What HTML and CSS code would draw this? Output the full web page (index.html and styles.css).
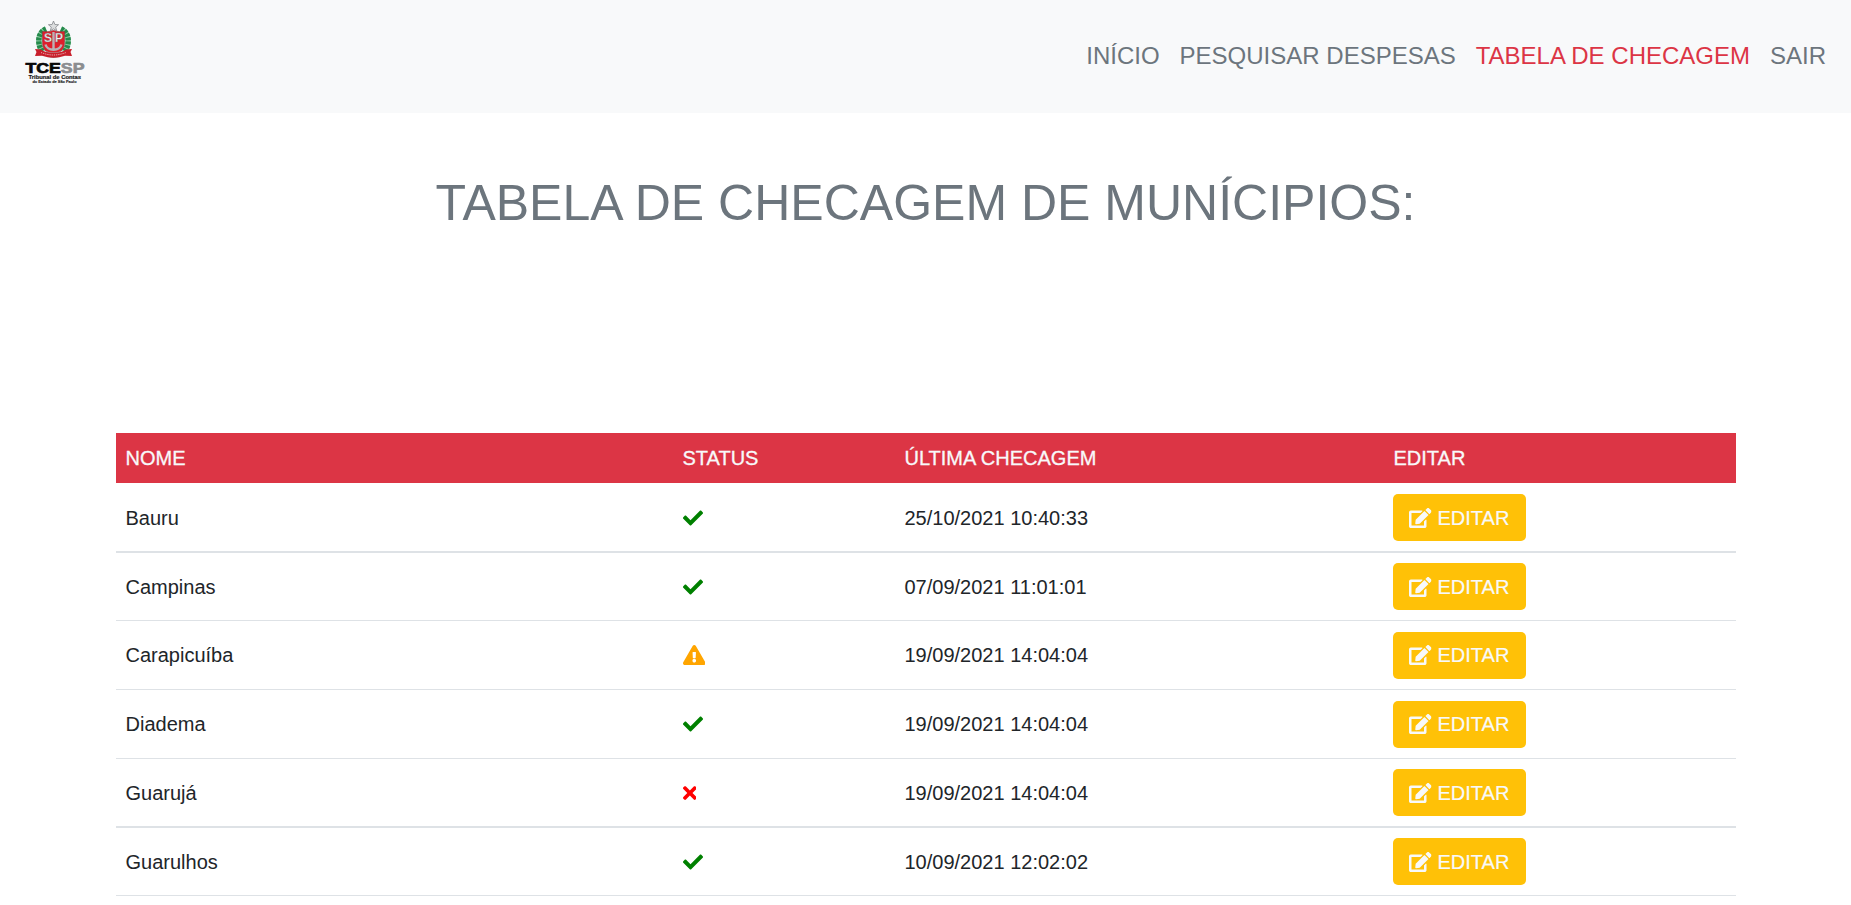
FILE: index.html
```html
<!DOCTYPE html>
<html lang="pt-BR">
<head>
<meta charset="utf-8">
<title>Tabela de Checagem</title>
<link rel="stylesheet" href="styles.css">
</head>
<body>
<svg class="sprite" aria-hidden="true">
  <symbol id="check" viewBox="0 0 512 512"><path d="M173.898 439.404l-166.4-166.4c-9.997-9.997-9.997-26.206 0-36.204l36.203-36.204c9.997-9.998 26.207-9.998 36.204 0L192 312.69 432.095 72.596c9.997-9.997 26.207-9.997 36.204 0l36.203 36.204c9.997 9.997 9.997 26.206 0 36.204l-294.4 294.401c-9.998 9.997-26.207 9.997-36.204-.001z"/></symbol>
  <symbol id="times" viewBox="0 0 352 512"><path d="M242.72 256l100.07-100.07c12.28-12.28 12.28-32.19 0-44.48l-22.24-22.24c-12.28-12.28-32.19-12.28-44.48 0L176 189.28 75.93 89.21c-12.28-12.28-32.19-12.28-44.48 0L9.21 111.45c-12.28 12.28-12.28 32.19 0 44.48L109.28 256 9.21 356.07c-12.28 12.28-12.28 32.19 0 44.48l22.24 22.24c12.28 12.28 32.2 12.28 44.48 0L176 322.72l100.07 100.07c12.28 12.28 32.2 12.28 44.48 0l22.24-22.24c12.28-12.28 12.28-32.19 0-44.48L242.72 256z"/></symbol>
  <symbol id="warning" viewBox="0 0 576 512"><path d="M569.517 440.013C587.975 472.007 564.806 512 527.94 512H48.054c-36.937 0-59.999-40.055-41.577-71.987L246.423 23.985c18.467-32.009 64.72-31.951 83.154 0l239.94 416.028zM288 354c-25.405 0-46 20.595-46 46s20.595 46 46 46 46-20.595 46-46-20.595-46-46-46zm-43.673-165.346l7.418 136c.347 6.364 5.609 11.346 11.982 11.346h48.546c6.373 0 11.635-4.982 11.982-11.346l7.418-136c.375-6.874-5.098-12.654-11.982-12.654h-63.383c-6.884 0-12.356 5.78-11.981 12.654z"/></symbol>
  <symbol id="edit" viewBox="0 0 576 512"><path d="M402.6 83.2l90.2 90.2c3.8 3.8 3.8 10 0 13.8L274.4 405.6l-92.8 10.3c-12.4 1.4-22.9-9.1-21.5-21.5l10.3-92.8L388.8 83.2c3.8-3.8 10-3.8 13.8 0zm162-22.9l-48.8-48.8c-15.2-15.2-39.9-15.2-55.2 0l-35.4 35.4c-3.8 3.8-3.8 10 0 13.8l90.2 90.2c3.8 3.8 10 3.8 13.8 0l35.4-35.4c15.2-15.3 15.2-40 0-55.2zM384 346.2V448H64V128h229.8c3.2 0 6.2-1.3 8.5-3.5l40-40c7.6-7.6 2.2-20.5-8.5-20.5H48C21.5 64 0 85.5 0 112v352c0 26.5 21.5 48 48 48h352c26.5 0 48-21.5 48-48V306.2c0-10.7-12.9-16-20.5-8.5l-40 40c-2.2 2.3-3.5 5.3-3.5 8.5z"/></symbol>
</svg>
<header class="navbar">
  <a class="brand" href="#" aria-label="TCESP">
    <svg class="logo" viewBox="20 16 70 72">
      <g fill="none" stroke="#8fcaa3" stroke-width="5.500">
        <path d="M46 29C37 33 37 45 43 52"/><path d="M61 29C70 33 70 45 64 52"/>
      </g>
      <g fill="none" stroke="#258a4b" stroke-width="5.500" stroke-dasharray="2.800 1">
        <path d="M46 29C37 33 37 45 43 52"/><path d="M61 29C70 33 70 45 64 52"/>
      </g>
      <path d="M53.500 21l1.400 3.500 3.700.2-2.900 2.400 1 3.700-3.200-2-3.200 2 1-3.700-2.900-2.400 3.700-.2z" fill="#dcdedf" stroke="#85898d" stroke-width=".8"/>
      <path d="M42.500 31.500q5.500 1 11-1 5.500 2 11 1v11c0 7-5 11-11 13-6-2-11-6-11-13z" fill="#df1f2b" stroke="#8f3a3e" stroke-width=".7"/>
      <path d="M53.500 32v18M45.500 44.500c2 7 14 7 16 0" fill="none" stroke="#b9b1b4" stroke-width="2.400"/>
      <text class="crest" x="44" y="41.500">S</text><text class="crest" x="55" y="41.500">P</text>
      <path d="M46 51q7.500 3 15 0l-2 6q-5.500 2-11 0z" fill="#a7a0a1"/>
      <path d="M35 49l6 .5c5 4.500 20 4.500 25 0l6-.5-1.500 3 1.500 4-7-.3q-11.500 4-23 0l-7 .3 1.500-4z" fill="#c81f2b"/>
      <path d="M41 52.500q12.500 5 25 0" fill="none" stroke="#f3cccf" stroke-width=".9" stroke-dasharray="1.200 1"/>
      <text class="wordmark" x="25.500" y="73" textLength="59" lengthAdjust="spacingAndGlyphs">TCE<tspan class="wordmark-sp">SP</tspan></text>
      <text class="tagline" x="28.500" y="78.800" textLength="52.500" lengthAdjust="spacingAndGlyphs">Tribunal de Contas</text>
      <text class="subline" x="32.500" y="83" textLength="44" lengthAdjust="spacingAndGlyphs">do Estado de São Paulo</text>
    </svg>
  </a>
  <nav class="links">
    <a href="#">INÍCIO</a>
    <a href="#">PESQUISAR DESPESAS</a>
    <a class="active" href="#">TABELA DE CHECAGEM</a>
    <a href="#">SAIR</a>
  </nav>
</header>
<main class="content">
  <h1 class="title">TABELA DE CHECAGEM DE MUNÍCIPIOS:</h1>
  <div class="table">
    <div class="row head"><span>NOME</span><span>STATUS</span><span>ÚLTIMA CHECAGEM</span><span>EDITAR</span></div>
    <div class="row first thick"><span>Bauru</span><span><svg class="icon ok"><use href="#check"/></svg></span><span>25/10/2021 10:40:33</span><span><a class="button" href="#"><svg class="icon wide"><use href="#edit"/></svg>EDITAR</a></span></div>
    <div class="row short"><span>Campinas</span><span><svg class="icon ok"><use href="#check"/></svg></span><span>07/09/2021 11:01:01</span><span><a class="button" href="#"><svg class="icon wide"><use href="#edit"/></svg>EDITAR</a></span></div>
    <div class="row"><span>Carapicuíba</span><span><svg class="icon wide warn"><use href="#warning"/></svg></span><span>19/09/2021 14:04:04</span><span><a class="button" href="#"><svg class="icon wide"><use href="#edit"/></svg>EDITAR</a></span></div>
    <div class="row"><span>Diadema</span><span><svg class="icon ok"><use href="#check"/></svg></span><span>19/09/2021 14:04:04</span><span><a class="button" href="#"><svg class="icon wide"><use href="#edit"/></svg>EDITAR</a></span></div>
    <div class="row thick"><span>Guarujá</span><span><svg class="icon narrow bad"><use href="#times"/></svg></span><span>19/09/2021 14:04:04</span><span><a class="button" href="#"><svg class="icon wide"><use href="#edit"/></svg>EDITAR</a></span></div>
    <div class="row short"><span>Guarulhos</span><span><svg class="icon ok"><use href="#check"/></svg></span><span>10/09/2021 12:02:02</span><span><a class="button" href="#"><svg class="icon wide"><use href="#edit"/></svg>EDITAR</a></span></div>
  </div>
</main>
</body>
</html>
```

FILE: styles.css
```css
* { box-sizing: border-box; }
body {
  margin: 0;
  height: 905px;
  overflow: hidden;
  background: #fff;
  color: #212529;
  font: 20px/30px "Liberation Sans", Arial, sans-serif;
}
a { color: inherit; text-decoration: none; }
.sprite { display: none; }
.navbar {
  display: flex;
  align-items: center;
  justify-content: space-between;
  height: 113px;
  padding: 0 25px 0 20px;
  background: #f8f9fa;
}
.brand { display: flex; margin-top: -9px; }
.logo { width: 70px; height: 72px; }
.crest { font: bold 12px "Liberation Sans", sans-serif; fill: #f3f3f3; stroke: #666; stroke-width: .4px; }
.wordmark { font: bold 15px "Liberation Sans", sans-serif; fill: #080808; stroke: #080808; stroke-width: .7px; }
.wordmark-sp { fill: #8b8d90; stroke: #8b8d90; }
.tagline { font: bold 6px "Liberation Sans", sans-serif; fill: #1a1a1a; stroke: #1a1a1a; stroke-width: .2px; }
.subline { font: bold 4px "Liberation Sans", sans-serif; fill: #222; stroke: #222; stroke-width: .15px; }
.links {
  display: flex;
  gap: 20px;
  padding-bottom: 2px;
  color: #6c757d;
  font-size: 24px;
  line-height: 36px;
}
.active { color: #dc3545; }
.title {
  margin: 60px 0 0;
  color: #6c757d;
  font-size: 50px;
  font-weight: 400;
  line-height: 60px;
  text-align: center;
}
.table { width: 1620px; margin: 200px 0 0 116px; }
.row {
  display: grid;
  grid-template-columns: 557px 222px 489px 352px;
  align-items: center;
  height: 69px;
  border-bottom: 1px solid #dee2e6;
}
.row > span { display: flex; align-items: center; padding: 0 9.5px; }
.row > span:last-child { padding-left: 9px; }
.row.thick { border-bottom-width: 2px; }
.row.short { height: 68px; }
.row.first { height: 70px; padding-top: 1px; }
.row.head { height: 50px; border: 0; background: #dc3545; color: #f8f9fa; -webkit-text-stroke: .3px #f8f9fa; }
.row.head > span:last-child { padding-left: 9.5px; }
.icon { width: 20px; height: 20px; fill: currentColor; }
.wide { width: 22.5px; }
.narrow { width: 13.75px; }
.ok { color: green; }
.warn { color: orange; }
.bad { color: red; }
.button {
  display: flex;
  align-items: center;
  gap: 6px;
  width: 133px;
  height: 47px;
  padding: 0 16px;
  border-radius: 5px;
  background: #ffc107;
  color: #f8f9fa;
  -webkit-text-stroke: .2px #f8f9fa;
}
```
